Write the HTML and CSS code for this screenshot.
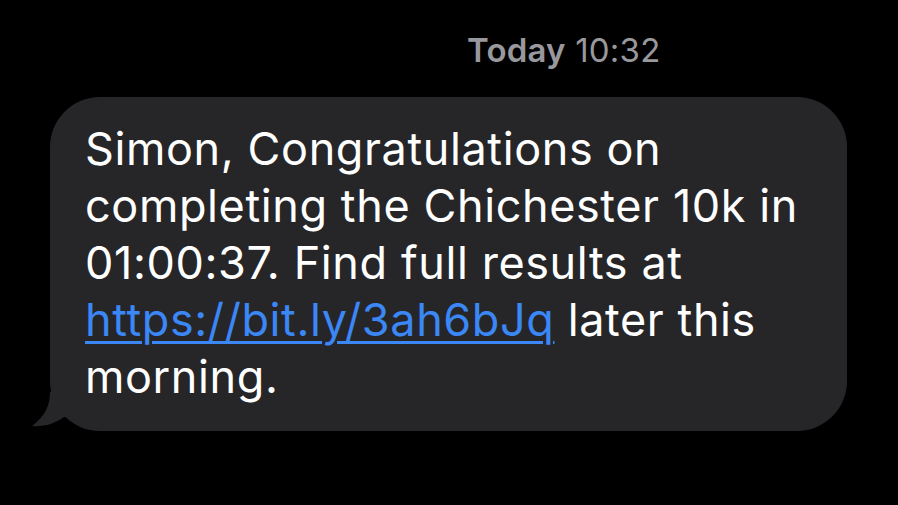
FILE: index.html
```html
<!DOCTYPE html>
<html>
<head>
<meta charset="utf-8">
<link rel="stylesheet" href="styles.css">
</head>
<body>
<div class="thread">
  <div class="stamp"><span class="day">Today</span> 10:32</div>
  <div class="bubble">
    <p class="msg">Simon, Congratulations on<br>completing the Chichester 10k in<br>01:00:37. Find full results at<br><a class="link" href="#">https://bit.ly/3ah6bJq</a> later this<br>morning.</p>
    <svg class="tail" width="40" height="40" viewBox="0 0 40 40">
      <path d="M20 0 C20 14 15 24 2 34 C14 35 24 32 34 25 L40 25 L40 0 Z" fill="#262629"/>
    </svg>
  </div>
</div>
</body>
</html>
```

FILE: styles.css
```css
html, body {
  margin: 0;
  padding: 0;
  background: #000;
  width: 898px;
  height: 505px;
  overflow: hidden;
}
.thread {
  display: flex;
  flex-direction: column;
  font-family: Inter, "Liberation Sans", sans-serif;
}
.stamp {
  padding-top: 30px;
  padding-left: 467px;
  height: 40px;
  line-height: 40px;
  font-size: 33px;
  letter-spacing: 0.2px;
  color: #98989d;
  white-space: nowrap;
}
.day {
  font-weight: 600;
}
.bubble {
  position: relative;
  margin-top: 27px;
  margin-left: 50px;
  width: 797px;
  box-sizing: border-box;
  padding: 23px 30px 26px 35px;
  background: #262629;
  border-radius: 50px;
}
.msg {
  margin: 0;
  font-size: 45px;
  letter-spacing: 0.6px;
  line-height: 57px;
  color: #fff;
  white-space: nowrap;
}
.link {
  color: #3a87f5;
  text-decoration: underline;
  text-decoration-thickness: 3px;
  text-underline-offset: 5px;
}
.tail {
  position: absolute;
  left: -20px;
  bottom: -1px;
}
```
